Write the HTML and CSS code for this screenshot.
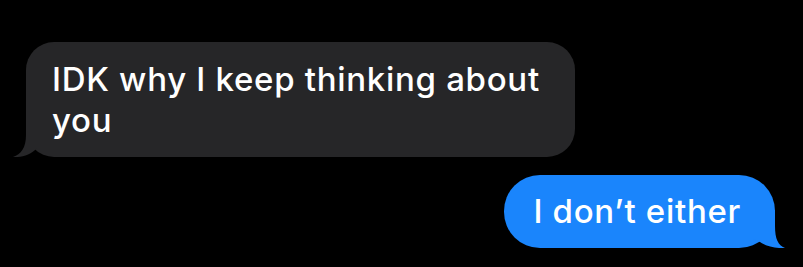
FILE: index.html
```html
<!DOCTYPE html>
<html>
<head>
<meta charset="utf-8">
<link rel="stylesheet" href="styles.css">
</head>
<body>
<div class="thread">
  <div class="bubble received">
    <p class="text">IDK why I keep thinking about you</p>
    <svg class="tail tail-left" width="40" height="40" viewBox="-15 -40 40 40"><path d="M0 -38 L0 -22 C0 -9 -5 -3 -13 0 C-4 0.5 5 -2 11 -9 L22 -9 L22 -38 Z" fill="#262628"/></svg>
  </div>
  <div class="bubble sent">
    <p class="text">I don’t either</p>
    <svg class="tail tail-right" width="40" height="40" viewBox="-25 -40 40 40"><path d="M0 -38 L0 -22 C0 -9 3 -3 10 0 C2 0.5 -8 -1 -15 -6 L-22 -9 L-22 -38 Z" fill="#1a85fc"/></svg>
  </div>
</div>
</body>
</html>
```

FILE: styles.css
```css
html, body {
  margin: 0;
  padding: 0;
  background: #000;
}
body {
  width: 803px;
  height: 267px;
  overflow: hidden;
}
.thread {
  display: flex;
  flex-direction: column;
  gap: 18px;
  padding: 42px 28px 0 26px;
  font-family: Inter, "Noto Sans", sans-serif;
  color: #fff;
}
.bubble {
  position: relative;
  box-sizing: border-box;
}
.text {
  margin: 0;
  font-size: 33px;
  font-weight: 500;
  line-height: 41px;
  letter-spacing: 0.7px;
}
.received {
  align-self: flex-start;
  width: 549px;
  height: 115px;
  background: #262628;
  border-radius: 28px;
  padding: 17px 10px 0 26px;
}
.sent {
  align-self: flex-end;
  height: 73px;
  background: #1a85fc;
  border-radius: 36px;
  padding: 16px 34px 0 29px;
}
.tail {
  position: absolute;
  bottom: 0;
  display: block;
}
.tail-left {
  left: -15px;
}
.tail-right {
  right: -15px;
}
```
